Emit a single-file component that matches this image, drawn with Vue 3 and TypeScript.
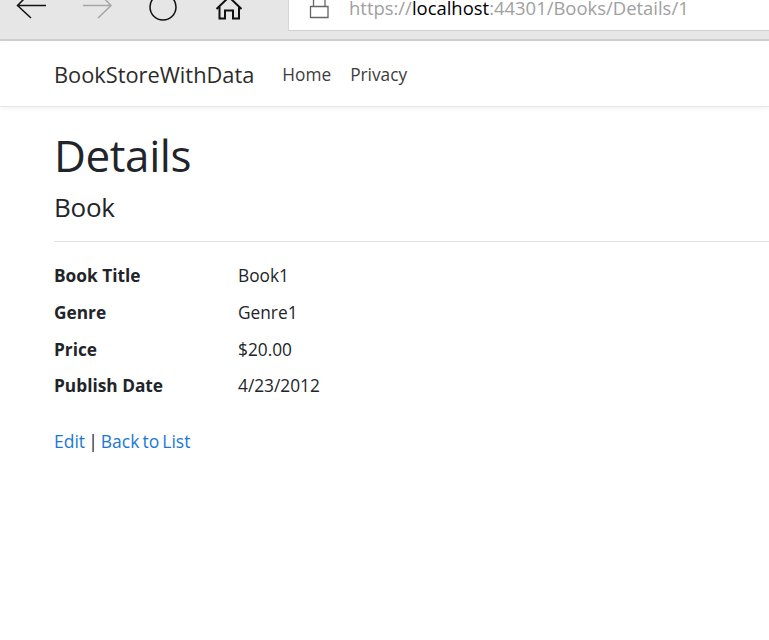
<script setup lang="ts">
interface Row { label: string; value: string }
const rows: Row[] = [
  { label: 'Book Title', value: 'Book1' },
  { label: 'Genre', value: 'Genre1' },
  { label: 'Price', value: '$20.00' },
  { label: 'Publish Date', value: '4/23/2012' },
]
</script>

<template>
  <div class="page">
    <div class="chrome">
      <svg class="tools" width="288" height="39" viewBox="0 0 288 39">
        <path d="M31 -8 L17.500 5.500 L31 18 M17.500 5.500 H46" fill="none" stroke="#111" stroke-width="1.500"/>
        <path d="M83 5.500 H111 M98 -8 L111 5.500 L98 18" fill="none" stroke="#a6a6a6" stroke-width="1.500"/>
        <circle cx="163" cy="7" r="13" fill="none" stroke="#111" stroke-width="1.500"/>
        <path d="M216.500 9 L229 -3 L241.500 9 M219.500 6 V18.500 H225 V10.500 H233 V18.500 H239 V6" fill="none" stroke="#111" stroke-width="2"/>
      </svg>
      <div class="address">
        <svg class="lock" width="20" height="20" viewBox="0 0 20 20"><path d="M3.500 -2 V6.500 M15 -2 V6.500 M0.500 6.500 H18 V17.500 H0.500 Z" fill="none" stroke="#666" stroke-width="1.300"/></svg>
        <span class="url">https://<span class="host">localhost</span>:44301/Books/Details/1</span>
      </div>
    </div>
    <nav class="navbar">
      <a class="brand">BookStoreWithData</a>
      <a class="nav-link">Home</a>
      <a class="nav-link">Privacy</a>
    </nav>
    <main class="content">
      <h1>Details</h1>
      <h4>Book</h4>
      <hr />
      <dl>
        <template v-for="r in rows" :key="r.label">
          <dt>{{ r.label }}</dt>
          <dd>{{ r.value }}</dd>
        </template>
      </dl>
      <div class="actions"><a>Edit</a> | <a>Back to List</a></div>
    </main>
  </div>
</template>

<style>
html, body { margin: 0; background: #fff; }
</style>

<style scoped>
.page { width: 769px; height: 640px; overflow: hidden; font-family: "Open Sans", "Noto Sans", sans-serif; color: #212529; font-size: 17.3px; }
.chrome { height: 39px; background: #e6e6e6; border-bottom: 2px solid #cfcfcf; display: flex; align-items: flex-start; }
.tools { display: block; flex: none; }
.address { flex: 1; height: 31px; background: #fff; border-left: 1px solid #d6d6d6; border-bottom: 1px solid #cfcfcf; display: flex; padding-left: 21px; box-sizing: border-box; overflow: hidden; }
.lock { flex: none; margin-right: 19px; overflow: visible; }
.url { font-size: 18.45px; line-height: 16px; color: #a0a0a0; white-space: nowrap; }
.host { color: #000; }
.navbar { height: 66px; padding-top: 2px; border-bottom: 1px solid #e5e5e5; box-shadow: 0 2px 4px rgba(0,0,0,.05); display: flex; align-items: center; padding-left: 54px; box-sizing: border-box; }
.brand { font-size: 21.8px; margin-right: 28px; color: #2b2b2b; }
.nav-link { font-size: 17.3px; margin-right: 19px; color: #3c3c3c; }
.content { padding-left: 54px; }
h1 { margin: 0; font-size: 44px; font-weight: 400; line-height: 53px; padding-top: 22px; letter-spacing: -0.4px; }
h4 { margin: 0; font-size: 26px; font-weight: 400; line-height: 36px; padding-top: 7px; letter-spacing: -0.25px; }
hr { border: 0; border-top: 1px solid #e2e2e2; margin: 16px 0 16px; }
dl { margin: 0; display: grid; grid-template-columns: 184px 1fr; grid-auto-rows: 36.8px; }
dt { font-weight: 700; line-height: 36.8px; }
dd { margin: 0; line-height: 36.8px; }
.actions { margin-top: 23.5px; line-height: 24px; font-size: 17.5px; word-spacing: -1.5px; }
a { color: inherit; }
.actions a { color: #1b78d2; }
</style>
